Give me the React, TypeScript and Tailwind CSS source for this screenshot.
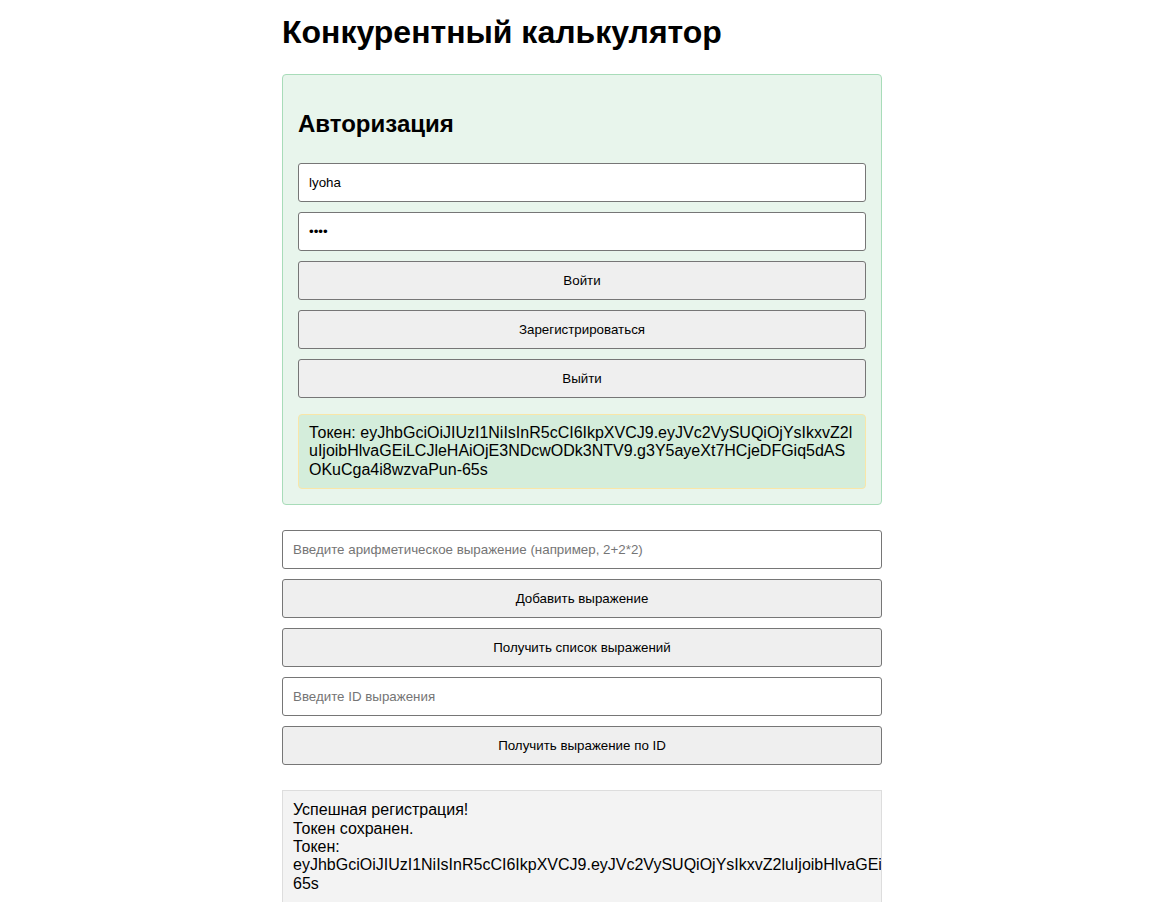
const TOKEN =
  "eyJhbGciOiJIUzI1NiIsInR5cCI6IkpXVCJ9.eyJVc2VySUQiOjYsIkxvZ2luIjoibHlvaGEiLCJleHAiOjE3NDcwODk3NTV9.g3Y5ayeXt7HCjeDFGiq5dASOKuCga4i8wzvaPun-65s";

function Field({ value, placeholder, type = "text" }: { value?: string; placeholder?: string; type?: string }) {
  return (
    <input
      type={type}
      defaultValue={value}
      placeholder={placeholder}
      className="box-border block h-[39px] w-full rounded-[3px] border border-[#767676] bg-white px-[10px] text-[13.33px] text-black placeholder:text-[#757575] outline-none"
    />
  );
}

function Btn({ children }: { children: string }) {
  return (
    <button className="box-border block h-[39px] w-full rounded-[3px] border border-[#767676] bg-[#efefef] text-[13.33px] text-black">
      {children}
    </button>
  );
}

export default function App() {
  return (
    <div className="min-h-[902px] w-full bg-white pr-[6px] font-['Liberation_Sans',Arial,sans-serif] text-black">
      <div className="mx-auto w-[600px]">
        <h1 className="mb-[23px] pt-[14px] text-[32px] font-bold leading-[37px]">Конкурентный калькулятор</h1>

        <div className="rounded-[4px] border border-[#a8dcb9] bg-[#e8f5ec] p-[15px]">
          <h2 className="mb-[25px] mt-[20px] text-[24px] font-bold leading-[28px]">Авторизация</h2>
          <div className="flex flex-col gap-[10px]">
            <Field value="lyoha" />
            <Field value="1234" type="password" />
            <Btn>Войти</Btn>
            <Btn>Зарегистрироваться</Btn>
            <Btn>Выйти</Btn>
          </div>
          <div className="mt-4 rounded-[4px] border border-[#f9e6a8] bg-[#d4eddb] px-[10px] py-[9px] text-[16px] leading-[18.4px] break-all">
            Токен: {TOKEN}
          </div>
        </div>

        <div className="mt-[25px] flex flex-col gap-[10px]">
          <Field placeholder="Введите арифметическое выражение (например, 2+2*2)" />
          <Btn>Добавить выражение</Btn>
          <Btn>Получить список выражений</Btn>
          <Field placeholder="Введите ID выражения" />
          <Btn>Получить выражение по ID</Btn>
        </div>

        <div className="mt-[25px] overflow-hidden border border-[#dddddd] bg-[#f3f3f3] p-[10px] text-[16px] leading-[18.4px]">
          <div>Успешная регистрация!</div>
          <div>Токен сохранен.</div>
          <div>Токен: {TOKEN}</div>
        </div>
      </div>
    </div>
  );
}
